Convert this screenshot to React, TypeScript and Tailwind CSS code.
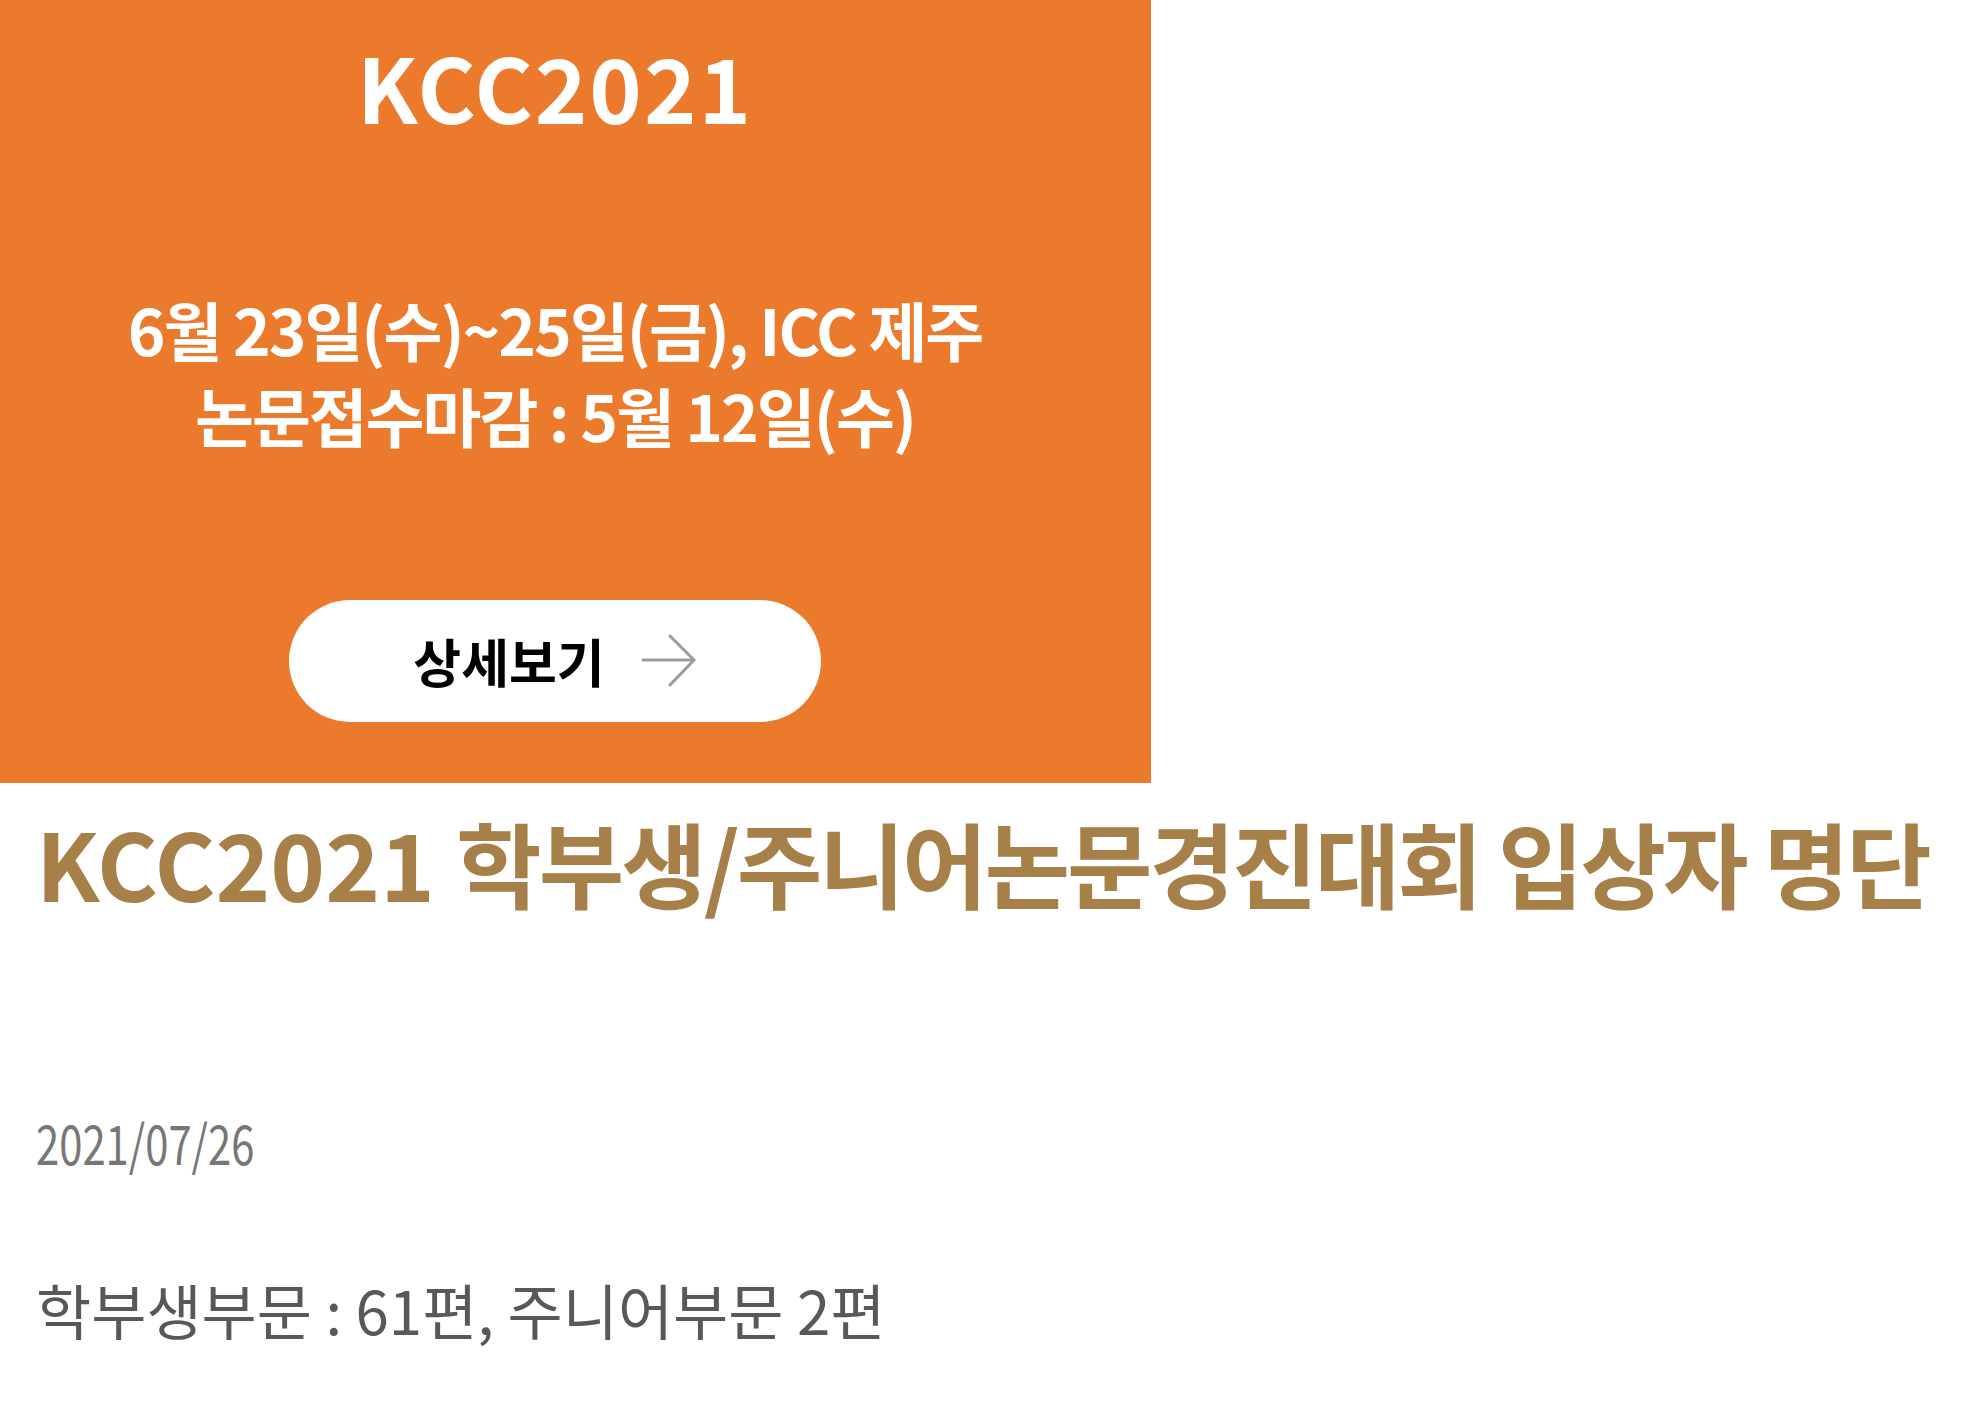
const ko = { fontFamily: '"Noto Sans CJK KR", "Noto Sans", sans-serif' };

function ArrowRight() {
    return (
        <svg width="56" height="54" viewBox="0 0 56 54" fill="none" stroke="#9b9b9b" strokeWidth="3" strokeLinecap="round" strokeLinejoin="round">
            <path d="M2 26H53" />
            <path d="M29 2L53 26L29 51" />
        </svg>
    );
}

function App() {
    return (
        <div className="min-h-screen bg-white" style={ko}>
            {/* Banner */}
            <section className="w-[1151px] h-[783px] bg-[#eb7a2d] flex flex-col items-center pr-[41px] text-white">
                <h2 className="mt-[41px] text-[89px] font-bold leading-none tracking-[2px]">KCC2021</h2>

                <p className="mt-[155px] text-[64px] font-bold leading-[86px] tracking-[-2px] text-center">
                    6월 23일(수)~25일(금), ICC 제주
                    <br />
                    논문접수마감 : 5월 12일(수)
                </p>

                <button className="mt-[143px] w-[532px] h-[122px] rounded-full bg-white flex items-center justify-center gap-[36px]">
                    <span className="text-[52px] font-bold text-black leading-none">상세보기</span>
                    <ArrowRight />
                </button>
            </section>

            {/* Post */}
            <div className="pl-[36px]">
                <h1 className="mt-[32px] text-[93px] font-bold leading-none text-[#a77f48] whitespace-nowrap">
                    KCC2021 <span className="tracking-[-3px]">학부생/주니어논문경진대회 입상자 명단</span>
                </h1>

                <p className="mt-[206px] text-[55px] leading-none text-[#777777] origin-left scale-x-[0.76]">
                    2021/07/26
                </p>

                <p className="mt-[110px] text-[60px] leading-none text-[#585858]">
                    학부생부문 : 61편, 주니어부문 2편
                </p>
            </div>
        </div>
    );
}

export default App;
